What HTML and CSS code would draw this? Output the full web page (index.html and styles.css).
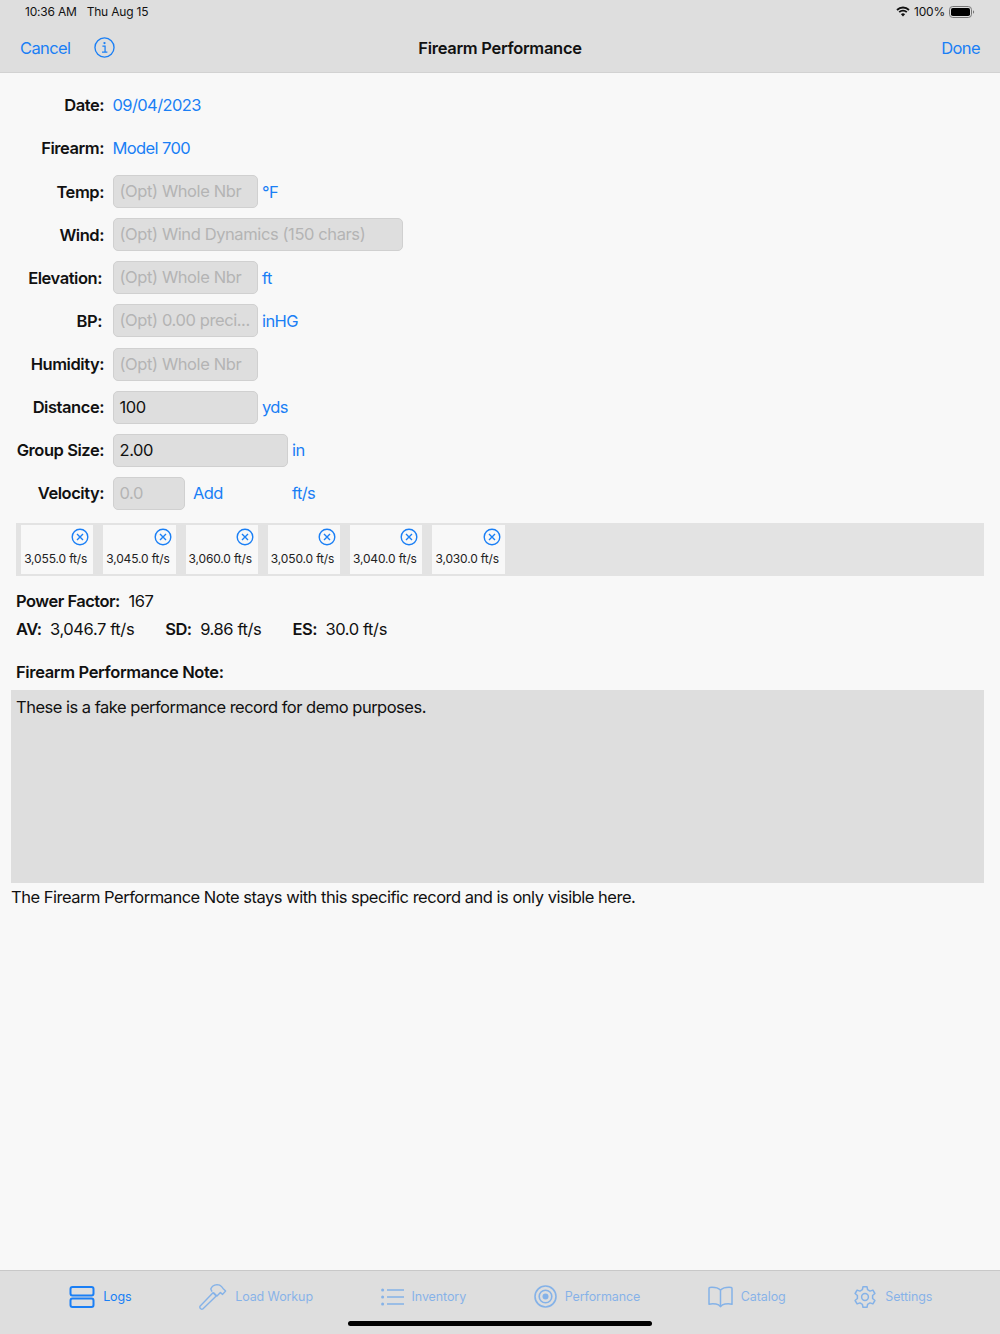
FILE: index.html
```html
<!DOCTYPE html>
<html lang="en">
<head>
<meta charset="UTF-8">
<meta name="viewport" content="width=device-width, initial-scale=1.0">
<title>Firearm Performance</title>
<link rel="stylesheet" href="styles.css">
</head>
<body>
    <div class="app">
        <header class="top">
            <div class="status">
                <div class="status-left">
                    <span>10:36 AM</span>
                    <span>Thu Aug 15</span>
                </div>
                <div class="status-right">
                    <svg class="wifi" width="14" height="11" viewBox="0 0 14 11">
                        <path d="M1 4 A8.5 8.5 0 0 1 13 4" fill="none" stroke="#111" stroke-width="1.8"/>
                        <path d="M3.2 6.2 A5.4 5.4 0 0 1 10.8 6.2" fill="none" stroke="#111" stroke-width="1.8"/>
                        <path d="M7 10.6 L4.9 8.2 A3 3 0 0 1 9.1 8.2 Z" fill="#111"/>
                    </svg>
                    <span>100%</span>
                    <svg class="battery" width="26" height="12" viewBox="0 0 26 12">
                        <rect x="0.5" y="0.5" width="22" height="11" rx="3.2" fill="none" stroke="#777"/>
                        <rect x="2" y="2" width="19" height="8" rx="1.8" fill="#000"/>
                        <path d="M24 4.2 A2 2 0 0 1 24 7.8 Z" fill="#777"/>
                    </svg>
                </div>
            </div>
            <nav class="navbar">
                <div class="nav-left">
                    <span class="link">Cancel</span>
                    <svg class="info" width="21" height="21" viewBox="0 0 22 22">
                        <circle cx="11" cy="11" r="10" fill="none" stroke="#1a7ff5" stroke-width="1.4"/>
                        <circle cx="11" cy="6.4" r="1.2" fill="#1a7ff5"/>
                        <path d="M8.8 9.6 H11.6 V15.8 M8.4 15.9 H14" fill="none" stroke="#1a7ff5" stroke-width="1.3"/>
                    </svg>
                </div>
                <h1>Firearm Performance</h1>
                <span class="link">Done</span>
            </nav>
        </header>

        <main class="content">
            <form class="fields">
                <div class="campo plain">
                    <label>Date:</label>
                    <span class="link">09/04/2023</span>
                </div>
                <div class="campo plain">
                    <label>Firearm:</label>
                    <span class="link">Model 700</span>
                </div>
                <div class="campo">
                    <label>Temp:</label>
                    <div class="box w-md placeholder">(Opt) Whole Nbr</div>
                    <span class="link">°F</span>
                </div>
                <div class="campo">
                    <label>Wind:</label>
                    <div class="box w-lg placeholder">(Opt) Wind Dynamics (150 chars)</div>
                </div>
                <div class="campo">
                    <label class="tight">Elevation:</label>
                    <div class="box w-md placeholder">(Opt) Whole Nbr</div>
                    <span class="link">ft</span>
                </div>
                <div class="campo">
                    <label class="tight">BP:</label>
                    <div class="box w-md placeholder">(Opt) 0.00 preci...</div>
                    <span class="link">inHG</span>
                </div>
                <div class="campo">
                    <label>Humidity:</label>
                    <div class="box w-md placeholder">(Opt) Whole Nbr</div>
                </div>
                <div class="campo">
                    <label>Distance:</label>
                    <div class="box w-md">100</div>
                    <span class="link">yds</span>
                </div>
                <div class="campo">
                    <label>Group Size:</label>
                    <div class="box w-gs">2.00</div>
                    <span class="link">in</span>
                </div>
                <div class="campo">
                    <label>Velocity:</label>
                    <div class="box w-sm placeholder">0.0</div>
                    <span class="link add">Add</span>
                    <span class="link">ft/s</span>
                </div>
            </form>

            <div class="strip">
                <div class="chip"><svg class="x" viewBox="0 0 18 18"><circle cx="9" cy="9" r="7.8"/><path d="M6 6 L12 12 M12 6 L6 12"/></svg><span>3,055.0 ft/s</span></div>
                <div class="chip"><svg class="x" viewBox="0 0 18 18"><circle cx="9" cy="9" r="7.8"/><path d="M6 6 L12 12 M12 6 L6 12"/></svg><span>3,045.0 ft/s</span></div>
                <div class="chip"><svg class="x" viewBox="0 0 18 18"><circle cx="9" cy="9" r="7.8"/><path d="M6 6 L12 12 M12 6 L6 12"/></svg><span>3,060.0 ft/s</span></div>
                <div class="chip"><svg class="x" viewBox="0 0 18 18"><circle cx="9" cy="9" r="7.8"/><path d="M6 6 L12 12 M12 6 L6 12"/></svg><span>3,050.0 ft/s</span></div>
                <div class="chip"><svg class="x" viewBox="0 0 18 18"><circle cx="9" cy="9" r="7.8"/><path d="M6 6 L12 12 M12 6 L6 12"/></svg><span>3,040.0 ft/s</span></div>
                <div class="chip"><svg class="x" viewBox="0 0 18 18"><circle cx="9" cy="9" r="7.8"/><path d="M6 6 L12 12 M12 6 L6 12"/></svg><span>3,030.0 ft/s</span></div>
            </div>

            <div class="stats">
                <div class="stat-row"><span><b>Power Factor:</b>167</span></div>
                <div class="stat-row">
                    <span><b>AV:</b>3,046.7 ft/s</span>
                    <span><b>SD:</b>9.86 ft/s</span>
                    <span><b>ES:</b>30.0 ft/s</span>
                </div>
            </div>

            <h2>Firearm Performance Note:</h2>
            <div class="note">These is a fake performance record for demo purposes.</div>
            <p class="hint">The Firearm Performance Note stays with this specific record and is only visible here.</p>
        </main>

        <footer class="tabbar">
            <div class="tab active">
                <svg width="26" height="22" viewBox="0 0 26 22" fill="none" stroke="#1a7ff5" stroke-width="2">
                    <rect x="1.5" y="1" width="23" height="8.6" rx="2"/>
                    <rect x="1.5" y="12.4" width="23" height="8.6" rx="2"/>
                </svg>
                <span>Logs</span>
            </div>
            <div class="tab">
                <svg width="28" height="27" viewBox="0 0 28 27" fill="none" stroke="#1a7ff5" stroke-width="1.4" stroke-linejoin="round">
                    <path d="M1 23.2 L14 9.8 L17.2 13 L3.8 26 Q2.8 26.6 1.8 25.8 L1 25 Q0.6 24 1 23.2 Z"/>
                    <path d="M13 8.6 L11.8 6 Q13 2.2 18 1.6 Q21 1.6 22.6 3.6 L24 5.4 L26.6 8 L23.6 11.4 L21.4 9.6 L18 13 L14.4 9.6"/>
                </svg>
                <span>Load Workup</span>
            </div>
            <div class="tab">
                <svg width="23" height="18" viewBox="0 0 23 18" fill="none" stroke="#1a7ff5" stroke-width="1.4">
                    <path d="M6 2 H23 M6 9 H23 M6 16 H23"/>
                    <g fill="#1a7ff5" stroke="none"><circle cx="1.6" cy="2" r="1.5"/><circle cx="1.6" cy="9" r="1.5"/><circle cx="1.6" cy="16" r="1.5"/></g>
                </svg>
                <span>Inventory</span>
            </div>
            <div class="tab">
                <svg width="23" height="23" viewBox="0 0 23 23" fill="none" stroke="#1a7ff5">
                    <circle cx="11.5" cy="11.5" r="10.5" stroke-width="1.6"/>
                    <circle cx="11.5" cy="11.5" r="6.3" stroke-width="1.6"/>
                    <circle cx="11.5" cy="11.5" r="3" fill="#1a7ff5" stroke="none"/>
                </svg>
                <span>Performance</span>
            </div>
            <div class="tab">
                <svg width="25" height="22" viewBox="0 0 25 22" fill="none" stroke="#1a7ff5" stroke-width="1.5" stroke-linejoin="round">
                    <path d="M12.5 4 Q9 0.8 1.8 1.4 Q1 1.5 1 2.4 V18.2 Q4 17.4 8 18 Q11 18.6 12.5 20.6 Q14 18.6 17 18 Q21 17.4 24 18.2 V2.4 Q24 1.5 23.2 1.4 Q16 0.8 12.5 4 Z"/>
                    <path d="M12.5 4 V20.6"/>
                </svg>
                <span>Catalog</span>
            </div>
            <div class="tab">
                <svg width="24" height="24" viewBox="0 0 24 24" fill="none" stroke="#1a7ff5" stroke-width="1.5" stroke-linejoin="round">
                    <path d="M10 1.2 H14 L14.6 4.2 L17 5.6 L19.9 4.6 L21.9 8 L19.6 10 V13 L21.9 15 L19.9 18.4 L17 17.4 L14.6 18.8 L14 21.8 H10 L9.4 18.8 L7 17.4 L4.1 18.4 L2.1 15 L4.4 13 V10 L2.1 8 L4.1 4.6 L7 5.6 L9.4 4.2 Z" transform="translate(0 0.5)"/>
                    <circle cx="12" cy="12" r="3.4"/>
                </svg>
                <span>Settings</span>
            </div>
            <div class="home-bar"></div>
        </footer>
    </div>
</body>
</html>
```

FILE: styles.css
```css
* {
    box-sizing: border-box;
}

body {
    font-family: Inter, "Liberation Sans", sans-serif;
    margin: 0;
    padding: 0;
    color: #111;
    background-color: #f8f8f8;
}

.app {
    width: 1000px;
    height: 1334px;
    display: flex;
    flex-direction: column;
}

.link {
    color: #1a7ff5;
    font-size: 16.5px;
    letter-spacing: -0.6px;
}

/* top bars */
.top {
    height: 73px;
    background-color: #dedede;
    border-bottom: 1px solid #d2d2d2;
    flex-shrink: 0;
}

.status {
    height: 23px;
    padding: 0 25px;
    display: flex;
    justify-content: space-between;
    align-items: center;
    font-size: 12px;
    letter-spacing: -0.2px;
}

.status-left {
    display: flex;
    gap: 10px;
}

.status-right {
    display: flex;
    align-items: center;
    gap: 4px;
}

.navbar {
    position: relative;
    height: 49px;
    padding: 0 20px;
    display: flex;
    justify-content: space-between;
    align-items: center;
}

.nav-left {
    display: flex;
    align-items: center;
    gap: 23px;
}

.navbar h1 {
    position: absolute;
    left: 0;
    right: 0;
    margin: 0;
    text-align: center;
    font-size: 16.5px;
    font-weight: 600;
    letter-spacing: -0.3px;
}

/* form */
.content {
    flex: 1;
    min-height: 0;
    padding: 16px 16px 0 11px;
}

.fields {
    display: flex;
    flex-direction: column;
    gap: 10.1px;
}

.campo {
    height: 33px;
    display: flex;
    align-items: center;
    gap: 4px;
    font-size: 16.5px;
}

.campo.plain {
    padding-bottom: 2px;
}

label {
    width: 93px;
    margin-right: 4.5px;
    text-align: right;
    white-space: nowrap;
    font-weight: 600;
    letter-spacing: -0.45px;
}

label.tight {
    width: 91px;
    margin-right: 6.5px;
}

.box {
    height: 33px;
    line-height: 31px;
    padding: 0 6px;
    background-color: #dedede;
    border: 1px solid #d0d0d0;
    border-radius: 5px;
    white-space: nowrap;
    overflow: hidden;
    letter-spacing: -0.4px;
}

.placeholder {
    color: #b4b4b4;
}

.w-sm {
    width: 72.5px;
}

.w-md {
    width: 145.5px;
}

.w-gs {
    width: 175.5px;
}

.w-lg {
    width: 290.5px;
}

.add {
    width: 95px;
    margin-left: 4px;
}

/* velocity readings */
.strip {
    margin: 13px 0 0 5px;
    height: 53px;
    padding: 2px 5px;
    background-color: #e3e3e3;
    display: flex;
    gap: 10px;
}

.chip {
    width: 72.3px;
    height: 49px;
    padding: 3px 4px 0 0;
    background-color: #f8f8f8;
    display: flex;
    flex-direction: column;
    align-items: flex-end;
}

.chip span {
    align-self: center;
    margin: 5px 0 0 1px;
    font-size: 12px;
    letter-spacing: -0.15px;
    white-space: nowrap;
    color: #222;
}

.x {
    width: 18px;
    height: 18px;
    fill: none;
    stroke: #1a7ff5;
    stroke-width: 1.4;
}

.stats {
    margin: 11px 0 0 5px;
    font-size: 16.5px;
    letter-spacing: -0.4px;
}

.stat-row {
    height: 28px;
    display: flex;
    align-items: center;
    gap: 31px;
}

.stat-row b {
    font-weight: 600;
    letter-spacing: -0.5px;
    margin-right: 8.5px;
}

h2 {
    margin: 14px 0 0 5px;
    height: 30px;
    line-height: 30px;
    font-size: 16.5px;
    font-weight: 600;
    letter-spacing: -0.35px;
}

.note {
    margin-top: 3px;
    height: 193.5px;
    padding: 7.5px 5px;
    background-color: #dedede;
    font-size: 16.5px;
    letter-spacing: -0.5px;
}

.hint {
    margin: 4px 0 0;
    font-size: 16.5px;
    letter-spacing: -0.49px;
}

/* tabs */
.tabbar {
    position: relative;
    height: 64px;
    padding: 0 0 12px 1.5px;
    background-color: #dedede;
    border-top: 1px solid #c8c8c8;
    flex-shrink: 0;
    display: flex;
    justify-content: space-evenly;
    align-items: center;
}

.tab {
    display: flex;
    align-items: center;
    gap: 8px;
    font-size: 12.5px;
    letter-spacing: -0.1px;
    color: #1a7ff5;
    opacity: 0.45;
}

.tab.active {
    opacity: 1;
}

.home-bar {
    position: absolute;
    left: 348px;
    bottom: 8px;
    width: 304px;
    height: 5px;
    border-radius: 3px;
    background-color: #000;
}
```
